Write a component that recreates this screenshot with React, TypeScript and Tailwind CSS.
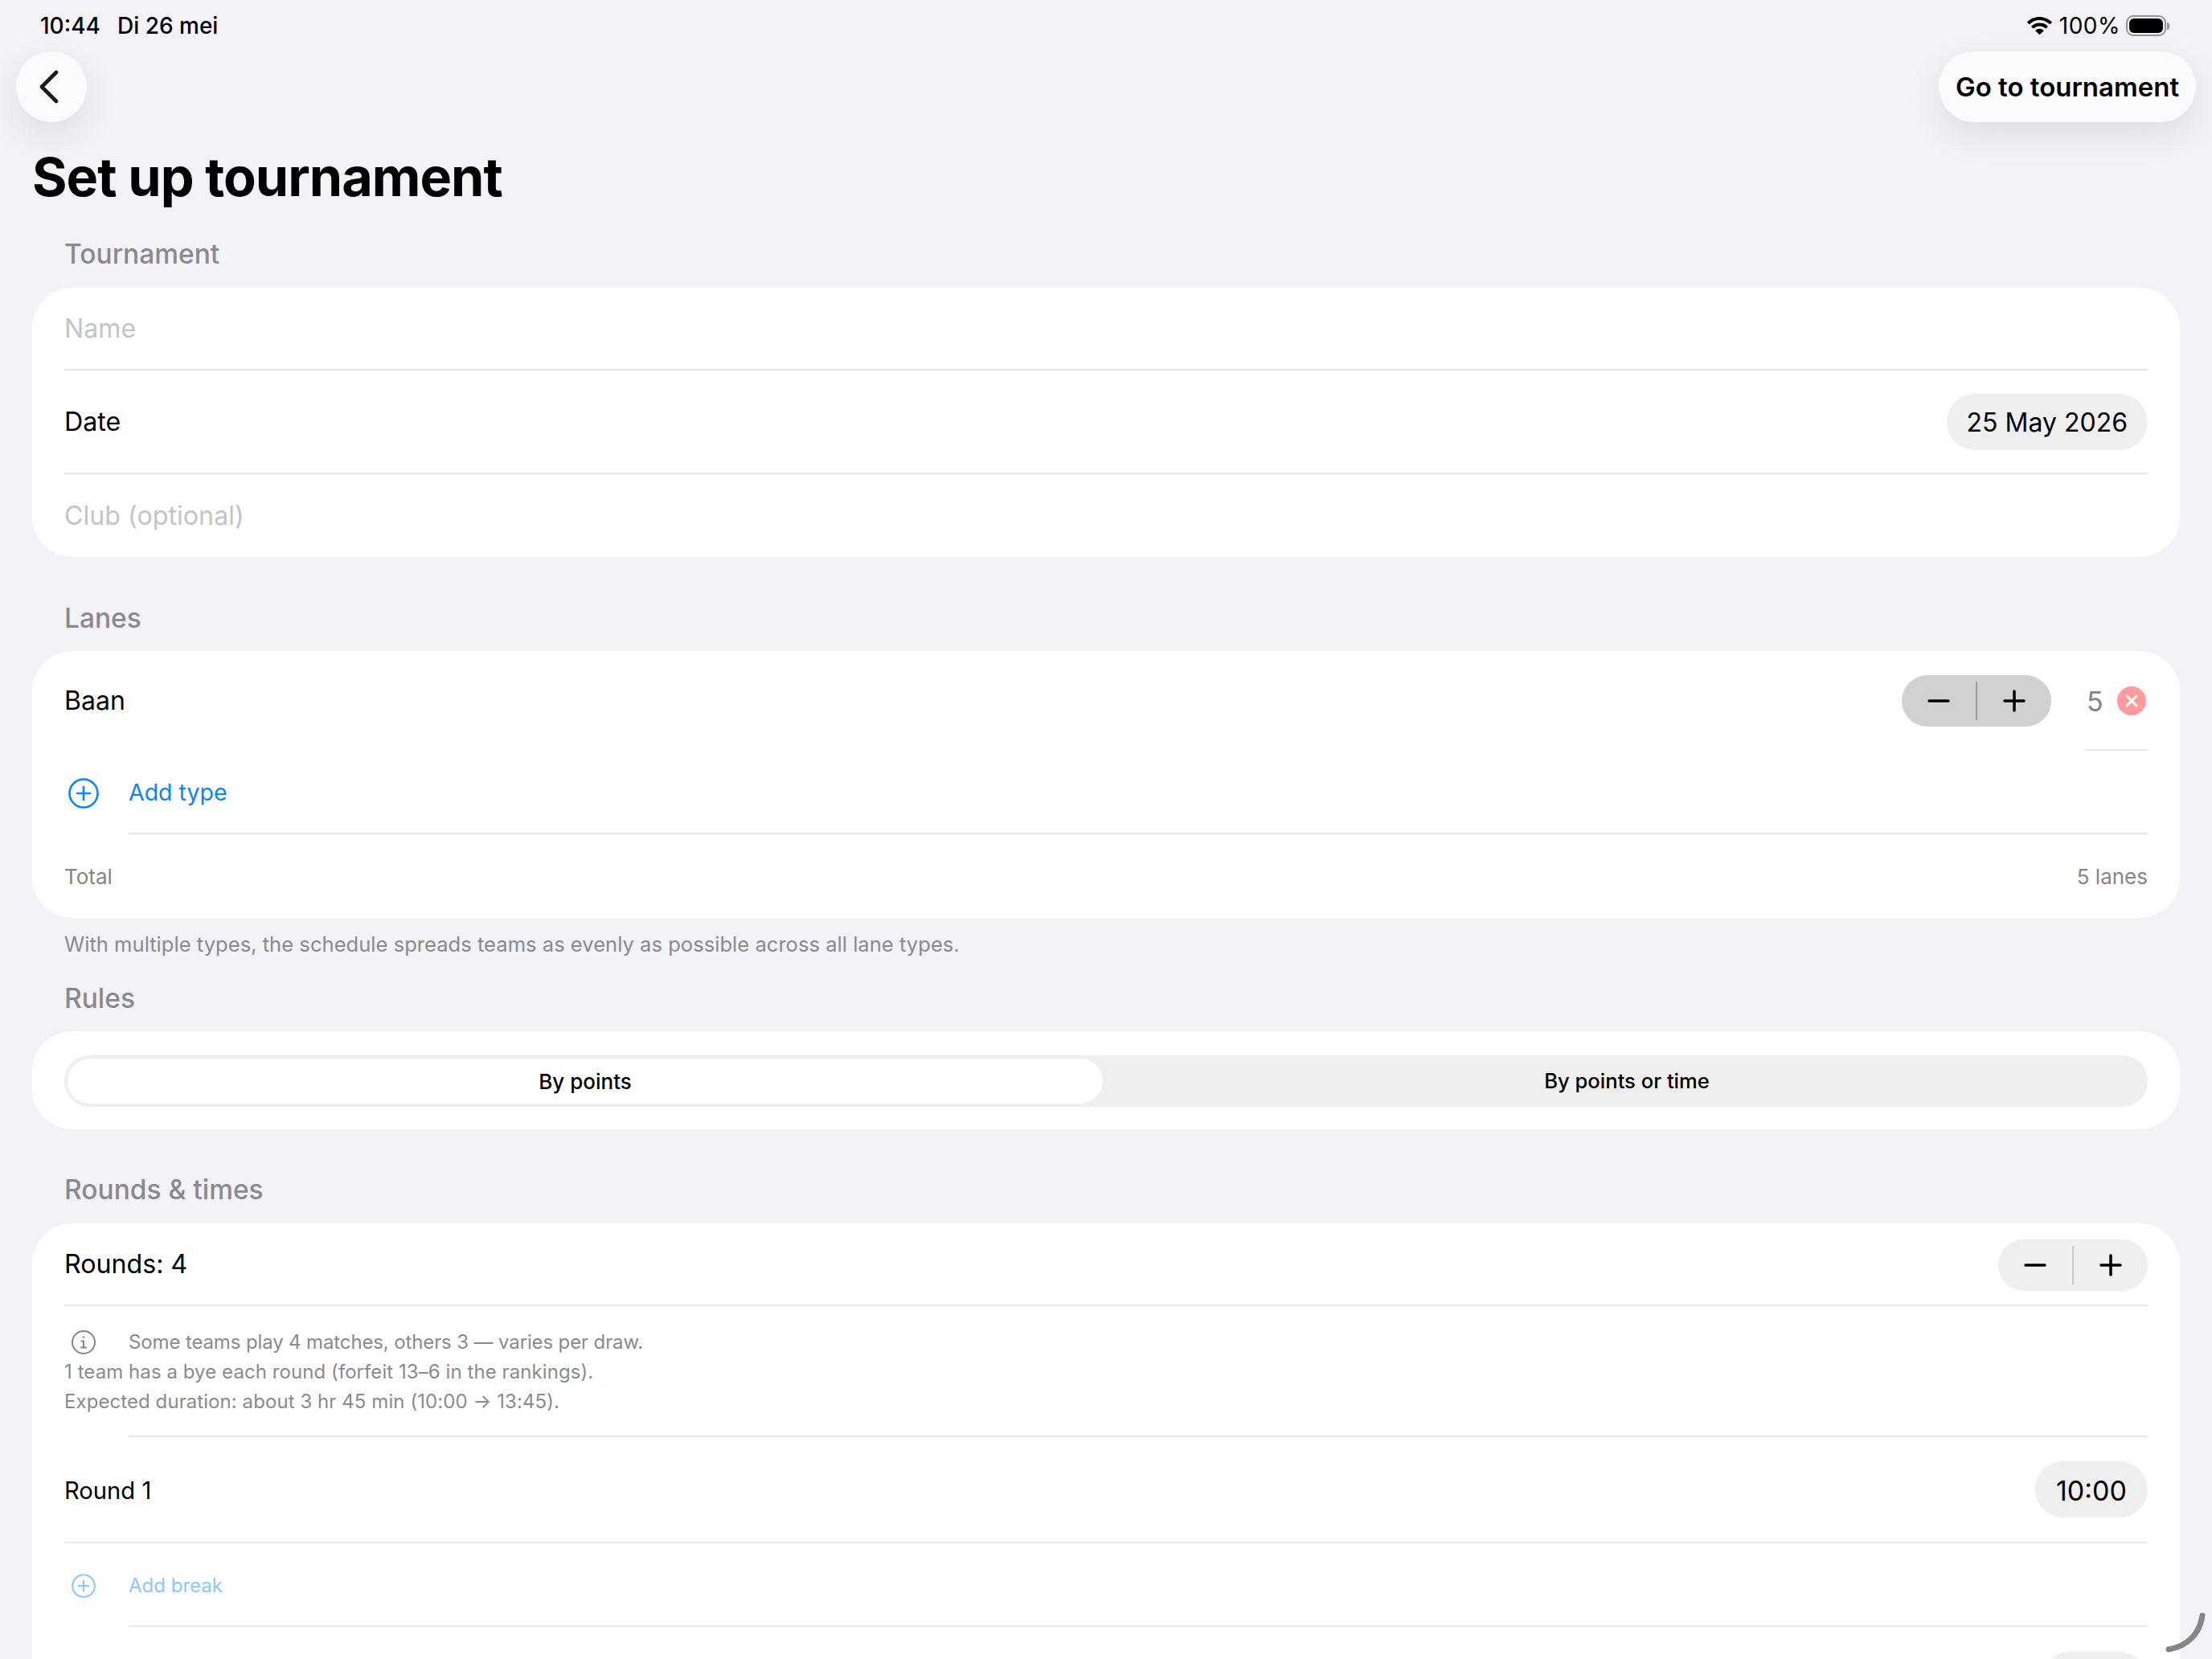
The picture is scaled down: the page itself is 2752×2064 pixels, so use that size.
import React from 'react';

const Divider = ({ inset = false }: { inset?: boolean }) => (
  <div className={`h-[2px] bg-[#e8e8ea] ${inset ? 'ml-[80px]' : ''}`} />
);

const SectionTitle = ({ children, className }: { children: React.ReactNode; className: string }) => (
  <div className={`h-[40px] pl-[40px] flex items-center text-[33.5px] font-medium text-[#8a8a8e] ${className}`}>
    {children}
  </div>
);

const Card = ({ children, className }: { children: React.ReactNode; className: string }) => (
  <div className={`bg-white rounded-[50px] px-[40px] ${className}`}>{children}</div>
);

const Pill = ({ children, className }: { children: React.ReactNode; className: string }) => (
  <div className={`h-[70px] pt-[2px] rounded-full bg-[#efeff0] flex items-center text-black ${className}`}>
    {children}
  </div>
);

const Stepper = ({ dark = false }: { dark?: boolean }) => (
  <div className={`w-[186px] h-[64px] rounded-full flex items-center ${dark ? 'bg-[#d1d1d1]' : 'bg-[#efeff0]'}`}>
    <div className="flex-1 flex justify-center">
      <svg width="28" height="6" viewBox="0 0 28 6">
        <path d="M2 3h24" stroke="#000" strokeWidth="3.5" strokeLinecap="round" />
      </svg>
    </div>
    <div className={`w-[2px] h-[48px] ${dark ? 'bg-[#9c9c9c]' : 'bg-[#c8c8ca]'}`} />
    <div className="flex-1 flex justify-center">
      <svg width="28" height="28" viewBox="0 0 28 28">
        <path d="M2 14h24M14 2v24" stroke="#000" strokeWidth="3.5" strokeLinecap="round" />
      </svg>
    </div>
  </div>
);

const PlusCircle = ({ size, color }: { size: number; color: string }) => (
  <svg width={size} height={size} viewBox="0 0 38 38" fill="none" stroke={color} strokeWidth="2.6" strokeLinecap="round">
    <circle cx="19" cy="19" r="17.5" />
    <path d="M11 19h16M19 11v16" />
  </svg>
);

const Wifi = () => (
  <svg width="31" height="22" viewBox="0 0 31 22" fill="#000">
    <path d="M15.5 0C9.6 0 4.3 2.3.4 6.1c-.3.3-.3.7 0 1l1.8 1.9c.3.3.7.3 1 0C6.4 5.900 10.700 4 15.500 4s9.100 1.900 12.300 5c.3.3.7.3 1 0l1.800-1.900c.3-.3.3-.7 0-1C26.700 2.300 21.400 0 15.500 0z" />
    <path d="M15.500 7.400c-3.900 0-7.400 1.500-10 4-.3.3-.3.7 0 1l1.900 1.900c.3.3.7.3 1 0 1.900-1.700 4.400-2.800 7.100-2.800s5.200 1.100 7.100 2.800c.3.3.7.3 1 0l1.900-1.900c.3-.3.3-.7 0-1-2.600-2.500-6.100-4-10-4z" />
    <path d="M15.500 14.800c-1.900 0-3.600.7-4.900 1.900-.3.3-.3.7 0 1l4.400 4.100c.3.3.7.3 1 0l4.400-4.100c.3-.3.3-.7 0-1-1.300-1.200-3-1.900-4.900-1.900z" />
  </svg>
);

export default function App() {
  return (
    <div className="relative w-[2752px] h-[2064px] overflow-hidden bg-[#f2f2f7] font-['Inter',sans-serif] text-black">
      {/* status bar */}
      <div className="h-[64px] pl-[50px] pr-[53px] flex items-center justify-between text-[28px] font-medium">
        <div className="flex gap-[21px]">
          <span>10:44</span>
          <span>Di 26 mei</span>
        </div>
        <div className="flex items-center">
          <Wifi />
          <span className="ml-[9px] font-normal tracking-[0.5px]">100%</span>
          <div className="ml-[7px] w-[50px] h-[26px] rounded-[9px] border-[2px] border-[#949494] p-[2px]">
            <div className="w-full h-full rounded-[6px] bg-black" />
          </div>
          <div className="ml-[1px] w-[3px] h-[9px] rounded-r-full bg-[#949494]" />
        </div>
      </div>

      {/* nav */}
      <div className="h-[88px] px-[20px] flex items-center justify-between">
        <button className="w-[88px] h-[88px] rounded-full bg-[#fbfbfe] shadow-[0_16px_48px_rgba(0,0,0,0.09)] flex items-center justify-center pr-[6px]">
          <svg width="26" height="42" viewBox="0 0 26 42" fill="none" stroke="#1c1c1e" strokeWidth="4.6" strokeLinecap="round" strokeLinejoin="round">
            <path d="M22 3 4 21l18 18" />
          </svg>
        </button>
        <button className="h-[88px] w-[320px] pt-[2px] rounded-full bg-[#fbfbfe] shadow-[0_16px_48px_rgba(0,0,0,0.09)] flex items-center justify-center text-[33px] font-semibold">
          Go to tournament
        </button>
      </div>

      <div className="px-[40px]">
        <h1 className="mt-[29px] h-[80px] flex items-center text-[66.5px] font-bold tracking-[-1px]">
          Set up tournament
        </h1>

        <SectionTitle className="mt-[35px]">Tournament</SectionTitle>
        <Card className="mt-[22px]">
          <div className="h-[101px] pt-[2px] flex items-center text-[32.2px] text-[#c4c4c7]">Name</div>
          <Divider />
          <div className="h-[127px] flex items-center justify-between text-[32.2px]">
            <span className="pt-[2px]">Date</span>
            <Pill className="px-[25px] text-[32px]">25 May 2026</Pill>
          </div>
          <Divider />
          <div className="h-[103px] pt-[2px] flex items-center text-[32.2px] text-[#c4c4c7]">Club (optional)</div>
        </Card>

        <SectionTitle className="mt-[56px]">Lanes</SectionTitle>
        <Card className="mt-[21px]">
          <div className="h-[122px] pt-[2px] flex items-center text-[32px]">
            <span className="flex-1">Baan</span>
            <Stepper dark />
            <span className="ml-[44px] w-[34px] text-[34px] text-[#858585]">5</span>
            <div className="ml-[4px] w-[36px] h-[36px] mr-[2px] rounded-full bg-[#ff9a9e] flex items-center justify-center">
              <svg width="18" height="18" viewBox="0 0 18 18">
                <path d="M3 3l12 12M15 3 3 15" stroke="#fff" strokeWidth="3" strokeLinecap="round" />
              </svg>
            </div>
          </div>
          <div className="h-[2px] ml-auto w-[77px] bg-[#e8e8ea]" />
          <div className="h-[102px] pt-[3px] flex items-center text-[28.5px] text-[#0a84ff]">
            <div className="w-[80px] pl-[5px]">
              <PlusCircle size={38} color="#0a84ff" />
            </div>
            <span>Add type</span>
          </div>
          <Divider inset />
          <div className="h-[104px] flex items-center justify-between text-[26px] text-[#858585]">
            <span>Total</span>
            <span>5 lanes</span>
          </div>
        </Card>
        <div className="mt-[13px] h-[40px] pl-[40px] flex items-center text-[25.6px] text-[#8a8a8e]">
          With multiple types, the schedule spreads teams as evenly as possible across all lane types.
        </div>

        <SectionTitle className="mt-[27px]">Rules</SectionTitle>
        <div className="mt-[21px] bg-white rounded-[50px] px-[40px] pt-[30px] pb-[28px]">
          <div className="h-[64px] rounded-full bg-[#efeff0] grid grid-cols-2 text-[26px] font-medium">
            <div className="rounded-full bg-white border-[4px] border-[#efeff0] flex items-center justify-center">By points</div>
            <div className="flex items-center justify-center text-[25.6px]">By points or time</div>
          </div>
        </div>

        <SectionTitle className="mt-[55px]">Rounds &amp; times</SectionTitle>
        <Card className="mt-[22px]">
          <div className="h-[101px] pt-[2px] flex items-center justify-between text-[32.2px]">
            <span>Rounds: 4</span>
            <Stepper />
          </div>
          <Divider />
          <div className="h-[161px] pt-[26px] text-[24px] leading-[37px] tracking-[0.07px] text-[#8a8a8e]">
            <div className="flex items-center">
              <div className="w-[80px] pl-[9px]">
                <svg width="30" height="30" viewBox="0 0 30 30" fill="none" stroke="#858585" strokeWidth="2" strokeLinecap="round">
                  <circle cx="15" cy="15" r="14" />
                  <path d="M15 13.500v8M12.500 13.500H15M12 21.500h6" />
                  <circle cx="15" cy="8.500" r="1.200" fill="#858585" stroke="none" />
                </svg>
              </div>
              <span className="tracking-[-0.13px]">Some teams play 4 matches, others 3 — varies per draw.</span>
            </div>
            <div>1 team has a bye each round (forfeit 13–6 in the rankings).</div>
            <div>Expected duration: about 3 hr 45 min (10:00 → 13:45).</div>
          </div>
          <Divider inset />
          <div className="h-[130px] flex items-center justify-between text-[29.2px]">
            <span className="pt-[4px]">Round 1</span>
            <Pill className="px-[26px] text-[34px]">10:00</Pill>
          </div>
          <Divider />
          <div className="h-[102px] pt-[3px] flex items-center text-[24px] text-[#8cc6ff]">
            <div className="w-[80px] pl-[9px]">
              <PlusCircle size={30} color="#8cc6ff" />
            </div>
            <span>Add break</span>
          </div>
          <Divider inset />
          <div className="pt-[31px] flex justify-end">
            <div className="h-[70px] w-[132px] rounded-full bg-[#efeff0]" />
          </div>
        </Card>
      </div>

      {/* window resize handle */}
      <svg className="absolute left-[2690px] top-[2004px]" width="56" height="54" viewBox="0 0 56 54" fill="none">
        <path d="M50 6C47 27 33 44 8 48" stroke="#868686" strokeWidth="7" strokeLinecap="round" />
      </svg>
    </div>
  );
}
